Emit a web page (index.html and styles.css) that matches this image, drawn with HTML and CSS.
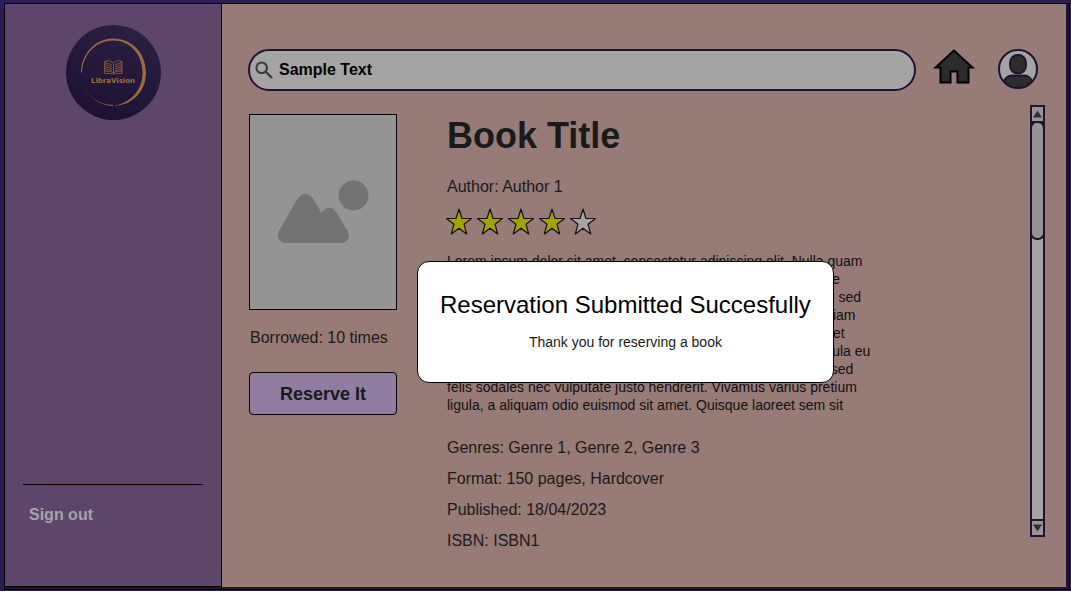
FILE: index.html
```html
<!DOCTYPE html>
<html lang="en">
<head>
<meta charset="utf-8">
<title>LibraVision - Book Title</title>
<link rel="stylesheet" href="styles.css">
</head>
<body>
<div class="app">
  <div class="frame">
    <aside class="sidebar">
      <svg class="logo" viewBox="0 0 95 95" role="img" aria-label="LibraVision">
        <defs>
          <linearGradient id="disc" x1="0.8" y1="0" x2="0.4" y2="1">
            <stop offset="0" stop-color="#2c2143"/>
            <stop offset="1" stop-color="#1c1033"/>
          </linearGradient>
          <linearGradient id="tail" x1="1" y1="0" x2="0" y2="0">
            <stop offset="0" stop-color="#a36f3c"/>
            <stop offset="1" stop-color="#a36f3c" stop-opacity="0"/>
          </linearGradient>
        </defs>
        <circle cx="47.500" cy="47.500" r="47.500" fill="url(#disc)"/>
        <path d="M15 47.500C15.500 28 30 13.500 47 13.500C66 13.500 80 28 80 48C80 67 65 81 47 81C62 79 76.500 67 76.500 48C76.500 29 64 15.500 47 15.500C31 15.500 17 28 16 47.500Z" fill="#9d6a3b"/>
        <path d="M17 60C22 72 33 80 47 80.500" fill="none" stroke="url(#tail)" stroke-width="1"/>
        <g fill="none" stroke="#94643c" stroke-width="0.800">
          <path d="M39.500 36.500H38.500V48.500H46L47.500 49.500L49 48.500H56V36.500H55"/>
          <path d="M40 36C43 35.500 46 36 47.500 38C49 36 52 35.500 55 36V46.500C52 46 49 46.500 47.500 48C46 46.500 43 46 40 46.500ZM47.500 38V48"/>
          <path d="M41 38.500L46 39.500M41 40.500L46 41.500M41 42.500L46 43.500M41 44.500L46 45.500M54 38.500L49 39.500M54 40.500L49 41.500M54 42.500L49 43.500M54 44.500L49 45.500"/>
        </g>
        <text class="logo-text" x="47" y="58" text-anchor="middle">LibraVision</text>
      </svg>
      <div class="sidebar-foot">
        <a class="sign-out" href="#">Sign out</a>
      </div>
    </aside>

    <main class="main">
      <header class="topbar">
        <label class="search">
          <svg class="search-icon" viewBox="0 0 18 18" aria-hidden="true">
            <circle cx="6.700" cy="6.700" r="5.300" fill="none" stroke="#3a3a3a" stroke-width="2"/>
            <path d="M10.500 10.500L17 17" stroke="#3a3a3a" stroke-width="2.400"/>
          </svg>
          <input class="search-input" type="text" value="Sample Text" aria-label="Search">
        </label>
        <a class="home" href="#" aria-label="Home">
          <svg class="home-icon" viewBox="0 0 42 36">
            <path d="M21 1.500L2.500 18.500H7.500V33.500H17.500V22.500H24.500V33.500H35.500V18.500H39.500Z" fill="#2b2b2b" stroke="#000" stroke-width="2"/>
          </svg>
        </a>
        <a class="profile" href="#" aria-label="Profile">
          <svg class="profile-icon" viewBox="0 0 40 40">
            <defs><clipPath id="round"><circle cx="20" cy="20" r="19"/></clipPath></defs>
            <circle cx="20" cy="20" r="19" fill="#a4a4a4"/>
            <g fill="#2d2d2d" stroke="#1f1233" stroke-width="1.800" clip-path="url(#round)">
              <rect x="12" y="6" width="16" height="18.500" rx="7.500"/>
              <path d="M5 34C7 29 9 26.500 14 26.500H26C31 26.500 33 29 35 34V42H5Z"/>
            </g>
            <circle cx="20" cy="20" r="19" fill="none" stroke="#1f1233" stroke-width="2"/>
          </svg>
        </a>
      </header>

      <div class="content">
        <section class="cover-column">
          <svg class="cover" viewBox="0 0 146 194" role="img" aria-label="Book cover">
            <g fill="#737373">
              <circle cx="103.500" cy="80.500" r="15"/>
              <path d="M29 116L46 86Q55 72 64 85L71.500 98Q79 88 86 97L97 115C101 121 98 128 91 128H37C29 128 26 122 29 116Z"/>
            </g>
          </svg>
          <p class="borrowed">Borrowed: 10 times</p>
          <button class="reserve" type="button">Reserve It</button>
        </section>

        <article class="book">
          <h1 class="title">Book Title</h1>
          <p class="author">Author: Author 1</p>
          <svg class="stars" viewBox="0 0 155 30" role="img" aria-label="4 out of 5 stars">
            <defs>
              <path id="star" d="M13 2L16 11.500H25.500L18 17.200L20.700 27L13 21.200L5.300 27L8 17.200L0.500 11.500H10Z" stroke="#111" stroke-width="1.200" stroke-linejoin="round"/>
            </defs>
            <use href="#star" x="0" fill="#a3a300"/>
            <use href="#star" x="31" fill="#a3a300"/>
            <use href="#star" x="62" fill="#a3a300"/>
            <use href="#star" x="93" fill="#a3a300"/>
            <use href="#star" x="124" fill="#a4a4a4"/>
          </svg>
          <p class="summary">Lorem ipsum dolor sit amet, consectetur adipiscing elit. Nulla quam<br>
            velit, tincidunt posuere lectus dolor ornare congue semper vitae<br>
            nunc, aliquam tincidunt ornare felis congue posuere eu tempor sed<br>
            mauris posuere velit vitae congue ornare dolor risus aliquam diam<br>
            semper ligula nunc tincidunt lectus felis ornare mauris ut risus et<br>
            semper aliquam ornare in posuere dolor congue velit lectus ligula eu<br>
            risus tincidunt nunc mauris posuere felis vitae congue tempor sed<br>
            felis sodales nec vulputate justo hendrerit. Vivamus varius pretium<br>
            ligula, a aliquam odio euismod sit amet. Quisque laoreet sem sit</p>
          <ul class="facts">
            <li>Genres: Genre 1, Genre 2, Genre 3</li>
            <li>Format: 150 pages, Hardcover</li>
            <li>Published: 18/04/2023</li>
            <li>ISBN: ISBN1</li>
          </ul>
        </article>

        <div class="scrollbar">
          <button class="scroll-button" type="button" aria-label="Scroll up">
            <svg class="arrow" viewBox="0 0 10 8"><path d="M5 0L10 8H0Z" fill="#303030"/></svg>
          </button>
          <div class="track"><div class="thumb"></div></div>
          <button class="scroll-button" type="button" aria-label="Scroll down">
            <svg class="arrow" viewBox="0 0 10 8"><path d="M0 0H10L5 8Z" fill="#303030"/></svg>
          </button>
        </div>
      </div>

      <div class="dialog" role="dialog" aria-labelledby="dialog-title">
        <h2 class="dialog-title" id="dialog-title">Reservation Submitted Succesfully</h2>
        <p class="dialog-text">Thank you for reserving a book</p>
      </div>
    </main>
  </div>
</div>
</body>
</html>
```
FILE: styles.css
```css
* {
  box-sizing: border-box;
}

body {
  margin: 0;
  background: #fff;
  color: #1a1a1a;
  font-family: "Liberation Sans", Arial, sans-serif;
  font-size: 16px;
  line-height: 20px;
}

h1, h2, p, ul {
  margin: 0;
  padding: 0;
}

svg {
  display: block;
}

.app {
  display: flex;
  min-height: calc(100vh - 2px);
  padding: 3px 1px 1px 4px;
  background: #2e1c55;
}

.frame {
  display: grid;
  grid-template-columns: 217px 1fr;
  flex: 1;
  padding: 0 3px 2px 0;
  border: 1px solid #000;
  background: #1f1233;
}

.sidebar {
  display: flex;
  flex-direction: column;
  justify-content: space-between;
  padding: 21px 18px 61px;
  border-right: 1px solid #000;
  border-bottom: 1px solid #000;
  background: #60456b;
}

.logo {
  align-self: center;
  width: 95px;
  height: 95px;
}

.logo-text {
  fill: #a06c3e;
  font-family: "DejaVu Sans", sans-serif;
  font-size: 7px;
  font-weight: bold;
}

.sidebar-foot {
  padding: 20px 6px 0;
  border-top: 1px solid #000;
}

.sign-out {
  color: #a4a4a4;
  font-weight: bold;
  text-decoration: none;
}

.main {
  position: relative;
  display: flex;
  flex-direction: column;
  padding: 45px 0 30px;
  background: #967b76;
}

.topbar {
  display: flex;
  align-items: flex-start;
  padding: 0 28px 0 26px;
}

.search {
  display: flex;
  flex: 1;
  align-items: center;
  gap: 6px;
  height: 42px;
  padding: 0 20px 0 5px;
  border: 2px solid #1f1233;
  border-radius: 21px;
  background: #a4a4a4;
}

.search-icon {
  width: 18px;
  height: 18px;
}

.search-input {
  flex: 1;
  min-width: 0;
  padding: 0;
  border: 0;
  outline: 0;
  background: transparent;
  color: #000;
  font: bold 16px/20px "Liberation Sans", Arial, sans-serif;
}

.home {
  margin: 0 23px 0 17px;
}

.home-icon {
  width: 42px;
  height: 36px;
}

.profile-icon {
  width: 40px;
  height: 40px;
}

.content {
  display: grid;
  grid-template-columns: 148px 1fr 15px;
  flex: 1;
  column-gap: 50px;
  padding: 14px 21px 0 27px;
}

.cover-column {
  padding-top: 9px;
}

.book {
  padding-top: 10px;
}

.cover {
  width: 148px;
  height: 196px;
  border: 1px solid #000;
  background: #949494;
}

.borrowed {
  margin: 18px 0 24px;
  padding-left: 1px;
}

.reserve {
  width: 100%;
  height: 43px;
  border: 1px solid #000;
  border-radius: 4px;
  background: #907da1;
  color: #1a1a1a;
  font: bold 18px/20px "Liberation Sans", Arial, sans-serif;
}

.title {
  font-size: 36px;
  line-height: 42px;
}

.author {
  margin: 20px 0 10px;
}

.stars {
  width: 155px;
  height: 30px;
  margin-left: -1px;
  overflow: visible;
}

.summary {
  margin-top: 15px;
  color: #111;
  font-size: 14px;
  line-height: 18px;
  white-space: nowrap;
}

.facts {
  margin-top: 18px;
  line-height: 31px;
  list-style: none;
}

.scrollbar {
  display: flex;
  flex-direction: column;
  margin-bottom: 20px;
  border: 2px solid #1f1233;
  background: #a4a4a4;
}

.scroll-button {
  display: grid;
  place-items: center;
  height: 14px;
  padding: 0;
  border: 0;
  background: #969696;
}

.arrow {
  width: 9px;
  height: 8px;
}

.track {
  flex: 1;
  border: solid #1f1233;
  border-width: 2px 0;
  background: #a4a4a4;
}

.thumb {
  height: 30%;
  margin: -2px -2px 0;
  border: 2px solid #1f1233;
  border-radius: 7px;
  background: #949494;
}

.dialog {
  position: absolute;
  top: 257px;
  left: 195px;
  padding: 28px 22px 30px;
  border: 1px solid #000;
  border-radius: 12px;
  background: #fff;
  text-align: center;
  white-space: nowrap;
}

.dialog-title {
  color: #000;
  font-size: 24px;
  font-weight: normal;
  line-height: 30px;
}

.dialog-text {
  margin-top: 12px;
  font-size: 14px;
}
```
